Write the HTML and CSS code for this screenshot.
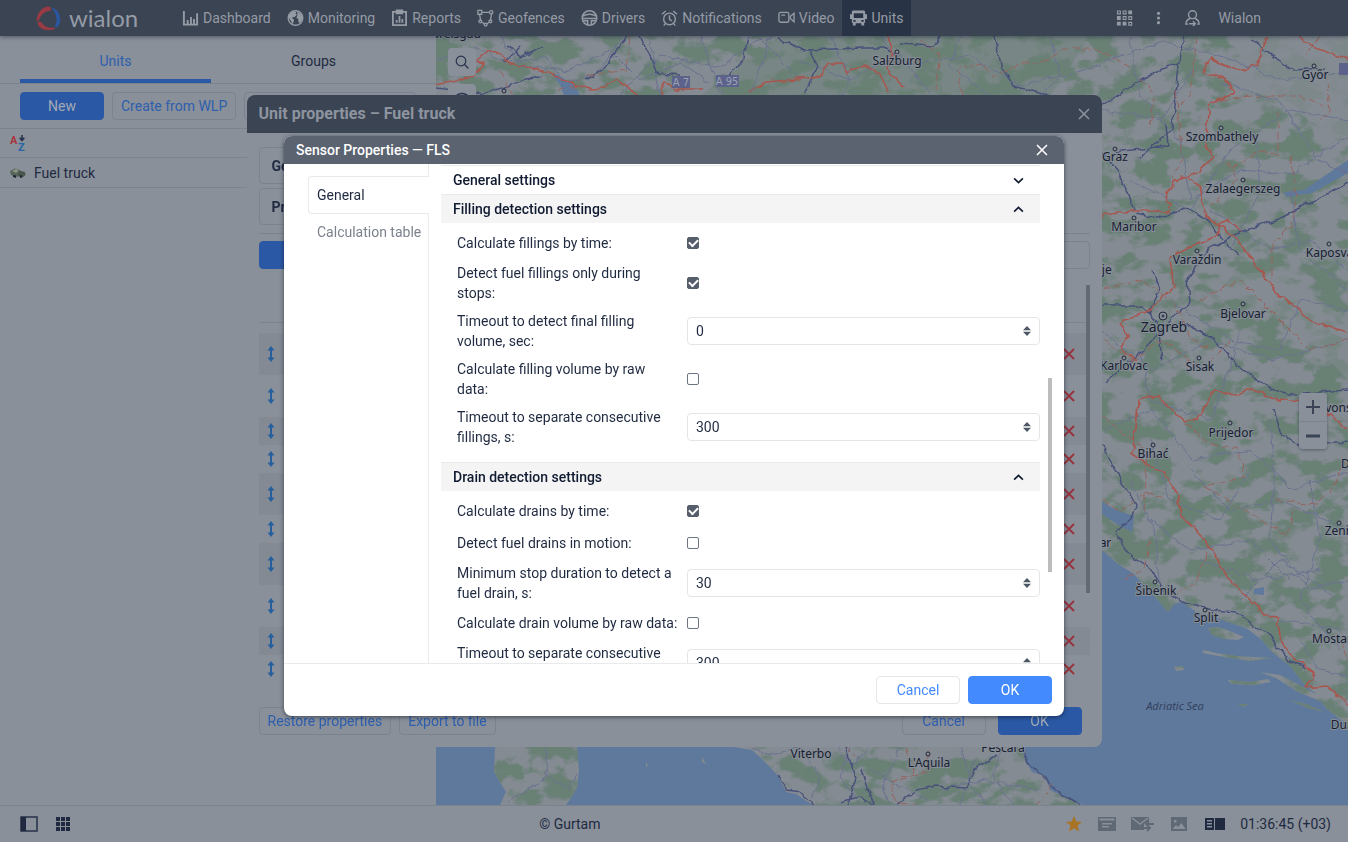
FILE: index.html
```html
<!DOCTYPE html>
<html lang="en">
<head>
  <meta charset="UTF-8" />
  <meta name="viewport" content="width=device-width, initial-scale=1.0" />
  <title>Wialon</title>
  <link rel="stylesheet" href="styles.css">
</head>
<body>
  <svg class="sprite" aria-hidden="true">
    <symbol id="i-updown" viewBox="0 0 8 16"><path d="M4 0l3.500 4.500H5v7h2.500L4 16 .5 11.500H3v-7H.5z"/></symbol>
    <symbol id="i-x" viewBox="0 0 12 12"><path d="M1 1l10 10M11 1L1 11"/></symbol>
    <symbol id="i-spin" viewBox="0 0 8 10"><path d="M4 0l4 4.300H0zM4 10L0 5.700h8z"/></symbol>
  </svg>

  <header class="topbar">
    <a href="#" class="logo">
      <svg class="logo-mark" viewBox="0 0 24 24">
        <path d="M12.500 .5C7 0 1 6 .5 14c.8 1.500 2 .5 2.500-.8C4.500 8.500 8 5 14 4.500 15 2.500 14 1 12.500.5z" fill="#983b45"/>
        <path d="M1.500 16.500c1 5.500 9 8.500 16.500 5.500.6-.8 0-1.300-.8-1.200C12 21.200 8.500 20 6 16.500c-1.500-2-4-1.500-4.500 0z" fill="#983b45"/>
        <path d="M14.500 1.500c5 .5 9.300 6.500 8.800 12.500-.3 3-1.500 5.500-3.300 6.500-1.500.3-2-.8-1.500-2 2.500-4.500 1.500-11-4-17z" fill="#2b56a0"/>
      </svg>
      <span>wialon</span>
    </a>
    <nav class="menu">
      <a href="#"><svg viewBox="0 0 18 18"><path d="M2 1.500V16h15M6 15v-4M9.500 15V8M12.700 15v-5M16 15V4" fill="none" stroke="currentColor" stroke-width="2"/></svg>Dashboard</a>
      <a href="#"><svg viewBox="0 0 18 18"><circle cx="9" cy="9" r="7.700" fill="none" stroke="currentColor" stroke-width="1.500"/><path d="M2 6l4-4 4 .5-1 2 1.500 1L8 8l-3 .5L7.500 11 6 16 4 12 1.500 8zM11 2.500L15 5l1.500 4-2 5-2.500-.5V10L10 9l1-3z"/></svg>Monitoring</a>
      <a href="#"><svg viewBox="0 0 18 18"><path d="M2 2.500h14v14H2zM6 1h6v3H6zM6 14v-3M9 14V7M12 14v-4" fill="none" stroke="currentColor" stroke-width="1.900"/></svg>Reports</a>
      <a href="#"><svg viewBox="0 0 18 18"><g fill="none" stroke="currentColor" stroke-width="1.400"><path d="M5 3h8M2.700 5.500L4 12M15.500 5l-1.500 7M5.500 13.500L8 15.500M12.500 13.500L10.500 15.500"/><path d="M1 1h4v4H1z"/><circle cx="15" cy="3" r="1.800"/><circle cx="3.500" cy="12.500" r="1.500"/><circle cx="14.200" cy="12.500" r="1.500"/><circle cx="9.200" cy="16" r="1.500"/></g></svg>Geofences</a>
      <a href="#"><svg viewBox="0 0 18 18"><g fill="none" stroke="currentColor" stroke-width="1.600"><circle cx="9" cy="9" r="7.700"/><path d="M2 7c4-2.500 10-2.500 14 0M1.500 9.500h15M2.500 12H7v4.500M15.500 12H11v4.500"/></g></svg>Drivers</a>
      <a href="#"><svg viewBox="0 0 18 18"><g fill="none" stroke="currentColor" stroke-width="1.500"><circle cx="9" cy="10" r="6.200"/><path d="M9 6v4.500l2.500 1.500M1 5l4-3.500M17 5l-4-3.500M4.500 15L3 17M13.500 15l1.500 2"/></g></svg>Notifications</a>
      <a href="#"><svg viewBox="0 0 18 18"><g fill="none" stroke="currentColor" stroke-width="1.400"><rect x="1" y="3" width="10.500" height="10.500" rx="2"/><path d="M3.500 6h4M13 7.500L17 4v9l-4-3.500z"/></g></svg>Video</a>
      <a href="#" class="active"><svg viewBox="0 0 18 18"><path fill-rule="evenodd" d="M3 1h12l1 1v3h2v5h-2v4h-1v3h-3v-2.500H6V17H3v-3H2v-4H0V5h2V2zM4 4v5h10V4zM3.500 11v2h2.500v-2zM12 11v2h2.500v-2z"/></svg>Units</a>
    </nav>
    <div class="account">
      <svg viewBox="0 0 18 18"><path d="M13 1h4v4h-4zM1 7h4v4H1zM1 13h4v4H1zM7 13h4v4H7z"/><path d="M1.600 1.600h3v3h-3zM7.600 1.600h3v3h-3zM7.600 7.600h3v3h-3zM13.600 7.600h3v3h-3zM13.600 13.600h3v3h-3z" fill="none" stroke="currentColor" stroke-width="1.200"/></svg>
      <svg viewBox="0 0 18 18"><circle cx="9" cy="4" r="1.700"/><circle cx="9" cy="9" r="1.700"/><circle cx="9" cy="14" r="1.700"/></svg>
      <svg viewBox="0 0 18 18"><g fill="none" stroke="currentColor" stroke-width="1.500"><circle cx="9" cy="5.500" r="4.200"/><path d="M6.500 9.500C3.500 10.500 2 12 2 15.500h2.500M11.500 9.500c3 1 4.500 2.500 4.500 6h-2M5.500 15h6.500M9.500 12.500L12 15l-2.500 2.500"/></g></svg>
      <a href="#">Wialon</a>
    </div>
  </header>

  <main class="workspace">
    <aside class="sidebar">
      <div class="tabs">
        <a href="#" class="tab selected">Units</a>
        <a href="#" class="tab">Groups</a>
      </div>
      <div class="actions">
        <button class="btn primary">New</button>
        <button class="btn fit">Create from WLP</button>
        <button class="btn import" aria-label="Import"></button>
      </div>
      <div class="list-row">
        <svg class="sort" viewBox="0 0 16 16"><text x="0" y="9" class="sort-a">A</text><text x="8" y="16" class="sort-z">Z</text><path d="M12 0v5M9.700 2.800L12 5.500l2.300-2.700" fill="none" stroke="#26304a" stroke-width="1.500"/></svg>
      </div>
      <div class="list-row unit">
        <svg viewBox="0 0 16 12"><path d="M0 4l5-2.500L10 3l1 4-3 3L1 8z" fill="#55655a"/><path d="M2 4l4-2 3 1.500L6 6z" fill="#8b9485"/><path d="M9 3.500l6 1.500.5 3-3 2.500L8 9z" fill="#47554b"/><path d="M3 8l3 .5v2.500L3 10zM10 8.500l2-.5v2.500l-2 .5z" fill="#1e2736"/></svg>
        Fuel truck
      </div>
    </aside>

    <section class="map">
      <svg class="terrain" viewBox="436 36 912 769" preserveAspectRatio="xMidYMid slice">
        <defs>
          <filter id="woods" x="0" y="0" width="100%" height="100%" color-interpolation-filters="sRGB">
            <feTurbulence type="fractalNoise" baseFrequency="0.035 0.05" numOctaves="5" seed="11"/>
            <feColorMatrix values="0 0 0 0 .41  0 0 0 0 .5  0 0 0 0 .46  7 0 0 0 -3.2"/>
          </filter>
          <filter id="jag" x="-5%" y="-5%" width="110%" height="110%">
            <feTurbulence type="fractalNoise" baseFrequency="0.1" numOctaves="2" seed="4" result="n"/>
            <feDisplacementMap in="SourceGraphic" in2="n" scale="7" xChannelSelector="R" yChannelSelector="G"/>
          </filter>
          <clipPath id="land">
            <path d="M436 36H1348V724L1338 718 1326 708 1316 694 1304 684 1290 666 1272 652 1262 640 1246 628 1228 622 1212 616 1196 612 1182 602 1174 604 1168 612 1158 600 1148 590 1134 574 1118 564 1102 550V600H436z"/>
            <path d="M495 747H577L579 770 577 788 571 798 566 805H500L506 792 494 772z"/>
            <path d="M733 747L752 750 768 765 779 777 786 792 796 794 808 802 812 805H1082L1065 797 1050 790 1045 776 1032 772 1025 760 1021 747z"/>
            <path d="M1208 628l10-1 12 4 14 6-6 3-14-1-12-4zM1204 650l12 3 20 3 36 2-22 3-26-4-22-4zM1228 680l22 2 18-3 3 3-16 3-24-1zM1260 672l20 3 14 7 18 10 22 12-12-2-24-10-22-14zM1290 700l16 4 18 8-16-4zM1174 667l9-1 1 4-8 1zM1238 704h10l-4 3zM702 757l4 7-4-2zM646 762l2 4-2 1z"/>
          </clipPath>
        </defs>
        <rect x="436" y="36" width="912" height="769" fill="#5e799c"/>
        <g clip-path="url(#land)">
          <rect x="436" y="36" width="912" height="769" fill="#848b92"/>
          <rect x="436" y="36" width="912" height="769" filter="url(#woods)"/>
          <path d="M900 36h190l-40 60H700l80-60z" fill="#6a8076" opacity=".45"/>
          <path d="M1260 36h88v110l-60-40-70-30z" fill="#848b92" opacity=".75"/>
          <path d="M1190 280l100 40 58 60v-60l-70-50z" fill="#848b92" opacity=".5"/>
        </g>
        <g fill="#5e799c">
          <path d="M552 73l8 3 14 9 6 10h-16l-4-10zM1284 192l20-2 44-30v13l-36 20-26 4zM1102 502l14 8 18 6-2 16-12-6-18-12zM1254 589l10-2v8l-10-1z"/>
        </g>

        <g class="minor" filter="url(#jag)">
          <path d="M436 60l40-12 30 14 40-4 20 24 30-8 25-35M500 36l20 30 50 4 40-20 30 30 40-18 30 20M620 95l40-40 60 12 40-28 40 40M650 36l10 59M700 36l20 59M770 36l-20 59M800 60l50 20 50-26 30 41M830 36l20 44-10 15M880 36l20 30 70-10 50 30 80-20"/>
          <path d="M960 36l-10 30 40 29M1050 36l10 40-20 19M1102 62l60-20 70 18 50 20 66-8M1130 36l10 60 40 44 10 60M1102 110l60 10 30-50M1130 180l60 30 40-60 60-40 58 10M1220 82l60 20 40 60 28 10M1190 200l50-30 50 4 58-38M1210 210l60 40 40-10 38 30M1290 190l10 60 48 40M1256 140l4 50-30 60"/>
          <path d="M1102 330l50 40 60-30 60 20 76-20M1140 350l10 50 60 20 20-50 10-40M1170 300l60 40 50 10 20-50 48 10M1102 430l50-20 40 50 60-10 40 40 58-20M1150 440l20 60 50 20 30-50M1190 470l40 40 50-10 68 30M1270 420l4 60-4 60 40 50 38-10M1150 520l40 30 60-10 40 40M1130 480l24 50 6 60M1200 560l60 20 60-10M1240 600l40-40 60 40M1280 620l60 10M1310 480l10 60-20 60 40 50M1300 640l20 30 28 6"/>
          <path d="M546 747l2 30-40 25M548 775l20 15 8-15M750 747l20 8 30-8M800 747l20 30-8 20M850 747l-10 30 20 28M838 747l14 20 16-20M868 770l60 30M900 747l-18 40 8 18M960 747l10 30-10 28M975 760l-8 20 20 25M1000 750l-6 30 20 25M940 790l40-10 60 10"/>
        </g>
        <g class="road" filter="url(#jag)">
          <path d="M508 44l12 14 22-12M505 62l16-16M436 88l50 5 56-18M628 36l-26 34-16 10M640 36l18 38 22 2M748 36l-4 22-16 20M778 38l26 12 60-2 20 0 14 8M810 50l8 16-14 29M900 44l34 2 6-10M994 36l8 32 12 18 50 14"/>
          <path d="M1184 36l-4 26-40 18-38 26M1178 64l-6 66-34 28M1166 124l2 22-54 6M1102 152l15 18 10 20 7 20M1134 214l24 4 30-10 20 12 20 26 10 8M1252 40l40 30 34-2M1348 183l-70 36-40 14-30 16-20 30 2 24-16 14-32 34-36 30M1102 306l40 0 16 18 4 36M1152 270l8 20-12 24M1180 322l30 14 30 32 28 20 20 6 60-4M1102 446l18 32 16 28-4 12-16 14 12 22 24 16 12 22 20 10 28 8 24 2 34 24 20 26 14 6M1274 408l6 24 20 14 48-4"/>
          <path d="M779 776l8 14 12 2 14 12M844 747l12 30-8 28M862 770l10 30 2 5M1020 747l8 16 16 14 16 16 20 12M996 756l-22 14-8 18-30-2-20 4-20 15M840 802l20-6 12 8"/>
        </g>
        <g class="border" filter="url(#jag)">
          <path d="M436 84l38-7 10-14-8-2 12-10 14 2 8 12 14 0 30 10 20 10 16 4 16-1 10-8 22 14M660 95l4-14 10 8 30 0M748 92l18-10 54-5 6-14 14 0 6 10 18-8 16 9 8 18M888 36l4 18-6 14 18 20M930 36"/>
          <path d="M1267 36l-10 30-20 4-26-12-8 14 24 8 6 14-24 10-4 38 8 16-14 14-26 10-8 18 6 5-2 6-38 0-26 4-6 8-14-4M1188 178l12 8 6 30 30 22 28 38 14 20 20 12 14 14 36 10M1242 232l-14-12-8 4-2 12-22 8-26 14 4 30-24 22-30 12 8 14-6 14 14 10M1298 36l12 10 38 14M1120 490"/>
          <path d="M1348 430l-18-16-14 2-10-14-28-2-26-12-14 6-26-2-10 24-16 6-20-18-8-8-20 4-2 30-4 24 32 20 14 22 4 20 20 20 16 24 10 18 28 28 8 8 14 4 2 20 12 20 24 16-10 14 20-2 26 22"/>
        </g>
        <g class="region" filter="url(#jag)">
          <path d="M630 36l-4 34-40 6-10 8 M500 70l12 26M558 90l24-4M920 40l20 14-4 36M962 95l-4-26 24-6 10 14 34-14 20-2 18-12 30 0 30 14 20 20 10 10-4 34M1176 90l6 70-10 20M1196 36l-6 60-14 14M1222 100l40-4 40 0 22 10M1226 160l10 20-24 26M1278 110l0 44-20-2-30 18M1290 155l6 40-4 30-20 20 0 34M1102 290l40-10 30 20 20 40 20 10M1200 300l40-20 40 40 30 30 38-10M1102 340l30 20 30-20 40 30 30-30M1184 424l26 20 28 4 6 30-40 8 50 30 34 20 6-30M1102 416l30 24 16 10-4 60M1276 500l40 4 20-20 6-20 6 0M1102 500l20 12 24-20 20 6M1150 540l-6 30-20 10M1206 552l-10 30-24 14M1326 72l4 40-12 10M1320 36l-14 18M1342 640l6 20"/>
          <path d="M846 747l10 10M906 747l8 26-24 8 8 22 20 2M900 780l30-10-2-20M1054 783l-16 22"/>
        </g>

        <g class="shield"><rect x="672" y="76" width="18" height="12"/><rect x="716" y="75" width="23" height="12"/><rect x="1339" y="63" width="20" height="12"/></g>
        <g class="shield-text"><text x="681" y="86">A 7</text><text x="727" y="85">A 95</text></g>
        <g class="town">
          <circle cx="504" cy="91" r="2"/><circle cx="897" cy="52" r="2"/><circle cx="1314" cy="66" r="2"/><circle cx="1221" cy="128" r="2"/><circle cx="1115" cy="149" r="2"/>
          <circle cx="1243" cy="180" r="2"/><circle cx="1134" cy="218" r="2"/><circle cx="1197" cy="251" r="2"/><circle cx="1329" cy="244" r="2"/><circle cx="1243" cy="304" r="2"/>
          <circle cx="1163" cy="316" r="4"/><circle cx="1163" cy="316" r="1"/><circle cx="1124" cy="358" r="2"/><circle cx="1199" cy="358" r="2"/><circle cx="1230" cy="423" r="2"/>
          <circle cx="1153" cy="445" r="2"/><circle cx="1339" cy="523" r="2"/><circle cx="1155" cy="582" r="2"/><circle cx="1205" cy="610" r="2"/><circle cx="1329" cy="631" r="2"/><circle cx="928" cy="754" r="2"/>
        </g>
        <g class="place">
          <text x="456" y="38">Breisgau</text>
          <text x="897" y="65">Salzburg</text><text x="1315" y="79">Győr</text><text x="1222" y="141">Szombathely</text>
          <text x="1115" y="161">Graz</text><text x="1243" y="193">Zalaegerszeg</text><text x="1134" y="231">Maribor</text>
          <text x="1197" y="264">Varaždin</text><text x="1332" y="257">Kaposvár</text><text x="1098" y="274">Celje</text>
          <text x="1243" y="318">Bjelovar</text><text x="1164" y="332" class="capital">Zagreb</text><text x="1124" y="370">Karlovac</text>
          <text x="1200" y="371">Sisak</text><text x="1231" y="437">Prijedor</text><text x="1153" y="458">Bihać</text>
          <text x="1335" y="412">Slavonski</text><text x="1358" y="468">Doboj</text><text x="1343" y="535">Zenica</text><text x="1095" y="547">Zadar</text>
          <text x="1156" y="595">Šibenik</text><text x="1206" y="622">Split</text><text x="1332" y="643">Mostar</text>
          <text x="1360" y="729">Dubrovnik</text><text x="811" y="758">Viterbo</text><text x="929" y="767">L'Aquila</text><text x="1003" y="752">Pescara</text>
        </g>
        <text x="1175" y="710" class="sea">Adriatic Sea</text>
      </svg>
      <div class="map-tools">
        <button aria-label="Search"><svg viewBox="0 0 14 14"><g fill="none" stroke="#27324a" stroke-width="1.200"><circle cx="6" cy="6" r="4.800"/><path d="M9.500 9.500l4 4"/></g></svg></button>
        <button aria-label="Visibility"><svg viewBox="0 0 14 14"><g fill="none" stroke="#27324a" stroke-width="1.500"><path d="M0 7c3-6 11-6 14 0-3 6-11 6-14 0z"/><circle cx="7" cy="7" r="2"/></g></svg></button>
      </div>
      <div class="zoom">
        <button aria-label="Zoom in"><svg viewBox="0 0 14 14"><path d="M7 0v14M0 7h14" stroke="#3a4455" stroke-width="2"/></svg></button>
        <button aria-label="Zoom out"><svg viewBox="0 0 14 14"><path d="M0 7h14" stroke="#3a4455" stroke-width="3"/></svg></button>
      </div>
    </section>
  </main>

  <footer class="statusbar">
    <div class="status-left">
      <svg viewBox="0 0 18 16"><path d="M1 1h16v14H1z" fill="none" stroke="#26314a" stroke-width="1.500"/><path d="M1 1h5v14H1z"/></svg>
      <svg viewBox="0 0 18 16"><path d="M2 1h4v4H2zM7 1h4v4H7zM12 1h4v4h-4zM2 6h4v4H2zM7 6h4v4H7zM12 6h4v4h-4zM2 11h4v4H2zM7 11h4v4H7zM12 11h4v4h-4z"/></svg>
    </div>
    <span>© Gurtam</span>
    <div class="status-right">
      <svg class="star" viewBox="0 0 16 16"><path d="M8 0l2.300 5.500 5.700.4-4.400 3.700L13 15.500 8 12.300l-5 3.200 1.400-5.900L0 5.900l5.700-.4z"/></svg>
      <svg class="dim" viewBox="0 0 18 16"><path fill-rule="evenodd" d="M0 1h18v14H0zM1.500 2.500v2h15v-2zM4 7v1.500h10V7zM4 10v1.500h7V10z"/></svg>
      <svg class="dim wide" viewBox="0 0 24 16"><path d="M0 1h18v4l-5 3v6H0z"/><path d="M1 2l8 6 8-6" fill="none" stroke="#89909a" stroke-width="1.500"/><path d="M23 8h-8M18 5l-3 3 3 3M12 12h7M16 9l3 3-3 3" fill="none" stroke="currentColor" stroke-width="1.800"/></svg>
      <svg class="dim" viewBox="0 0 18 16"><path fill-rule="evenodd" d="M1 1h16v14H1zM2.500 13h13l-4-6-3.500 4L6 9zM4 4v2.500h2.500V4z"/></svg>
      <svg class="wide" viewBox="0 0 24 16"><path fill-rule="evenodd" d="M2 2h9v12H2zM4 4v1.500h5V4zM4 7v1.500h5V7zM4 10v1.500h5V10zM12 2h10v12H12z"/></svg>
      <time>01:36:45 (+03)</time>
    </div>
  </footer>

  <div class="overlay">
    <div class="dialog unit-dialog">
      <div class="dialog-head">
        <h2>Unit properties – Fuel truck</h2>
        <button class="close" aria-label="Close"><svg viewBox="0 0 12 12"><use href="#i-x"/></svg></button>
      </div>
      <div class="unit-body">
        <button class="prop-tab">General</button>
        <button class="prop-tab">Profile</button>
        <div class="toolbar">
          <button class="btn primary" aria-label="New sensor"></button>
          <input type="text" aria-label="Search sensors">
        </div>
        <div class="table-head"></div>
        <ul class="sensors">
          <li class="tall"><svg class="move"><use href="#i-updown"/></svg><svg class="del"><use href="#i-x"/></svg></li>
          <li class="tall"><svg class="move"><use href="#i-updown"/></svg><svg class="del"><use href="#i-x"/></svg></li>
          <li><svg class="move"><use href="#i-updown"/></svg><svg class="del"><use href="#i-x"/></svg></li>
          <li><svg class="move"><use href="#i-updown"/></svg><svg class="del"><use href="#i-x"/></svg></li>
          <li class="tall"><svg class="move"><use href="#i-updown"/></svg><svg class="del"><use href="#i-x"/></svg></li>
          <li><svg class="move"><use href="#i-updown"/></svg><svg class="del"><use href="#i-x"/></svg></li>
          <li class="tall"><svg class="move"><use href="#i-updown"/></svg><svg class="del"><use href="#i-x"/></svg></li>
          <li class="tall"><svg class="move"><use href="#i-updown"/></svg><svg class="del"><use href="#i-x"/></svg></li>
          <li><svg class="move"><use href="#i-updown"/></svg><svg class="del"><use href="#i-x"/></svg></li>
          <li><svg class="move"><use href="#i-updown"/></svg><svg class="del"><use href="#i-x"/></svg></li>
        </ul>
        <div class="scroll-thumb"></div>
      </div>
      <div class="unit-foot">
        <button class="btn fit">Restore properties</button>
        <button class="btn fit">Export to file</button>
        <button class="btn push">Cancel</button>
        <button class="btn primary">OK</button>
      </div>
    </div>
  </div>

  <div class="overlay front">
    <form class="dialog sensor-dialog">
      <div class="dialog-head">
        <h2>Sensor Properties — FLS</h2>
        <button type="button" class="close" aria-label="Close"><svg viewBox="0 0 12 12"><use href="#i-x"/></svg></button>
      </div>
      <div class="sensor-body">
        <nav class="side-tabs">
          <a href="#" class="current">General</a>
          <a href="#">Calculation table</a>
        </nav>
        <div class="settings">
          <h3>General settings <svg viewBox="0 0 10 6"><path d="M1 1l4 4 4-4"/></svg></h3>
          <h3 class="open">Filling detection settings <svg viewBox="0 0 10 6"><path d="M1 5l4-4 4 4"/></svg></h3>
          <div class="fields">
            <div class="field"><label for="f1">Calculate fillings by time:</label><input type="checkbox" id="f1" checked></div>
            <div class="field"><label for="f2">Detect fuel fillings only during stops:</label><input type="checkbox" id="f2" checked></div>
            <div class="field"><label for="f3">Timeout to detect final filling volume, sec:</label><div class="number"><input type="text" id="f3" value="0"><svg><use href="#i-spin"/></svg></div></div>
            <div class="field"><label for="f4">Calculate filling volume by raw data:</label><input type="checkbox" id="f4"></div>
            <div class="field"><label for="f5">Timeout to separate consecutive fillings, s:</label><div class="number"><input type="text" id="f5" value="300"><svg><use href="#i-spin"/></svg></div></div>
          </div>
          <h3 class="open">Drain detection settings <svg viewBox="0 0 10 6"><path d="M1 5l4-4 4 4"/></svg></h3>
          <div class="fields">
            <div class="field"><label for="d1">Calculate drains by time:</label><input type="checkbox" id="d1" checked></div>
            <div class="field"><label for="d2">Detect fuel drains in motion:</label><input type="checkbox" id="d2"></div>
            <div class="field"><label for="d3">Minimum stop duration to detect a fuel drain, s:</label><div class="number"><input type="text" id="d3" value="30"><svg><use href="#i-spin"/></svg></div></div>
            <div class="field"><label for="d4">Calculate drain volume by raw data:</label><input type="checkbox" id="d4"></div>
            <div class="field"><label for="d5">Timeout to separate consecutive drains, s:</label><div class="number"><input type="text" id="d5" value="300"><svg><use href="#i-spin"/></svg></div></div>
          </div>
        </div>
        <div class="scroll-thumb"></div>
      </div>
      <div class="sensor-foot">
        <button type="button" class="btn">Cancel</button>
        <button type="button" class="btn primary">OK</button>
      </div>
    </form>
  </div>
</body>
</html>
```

FILE: styles.css
```css
:root {
  --page: #89909a;
  --line: #7b838e;
  --bar: #3b4453;
  --bar-text: #959ba5;
  --text: #1f2a41;
  --link: #2e5eae;
  --blue: #2b58a4;
  --edge: #e9eaec;
}

* { box-sizing: border-box; margin: 0; padding: 0; }

body {
  display: flex;
  flex-direction: column;
  height: 100vh;
  overflow: hidden;
  font: 14px/20px Roboto, sans-serif;
  background: var(--page);
  color: var(--text);
}

a { color: inherit; text-decoration: none; }
button, input { font: inherit; color: inherit; }
button { cursor: pointer; }
.sprite { display: none; }

/* top bar */
.topbar {
  display: flex;
  align-items: center;
  height: 36px;
  padding: 0 87px 0 36px;
  background: var(--bar);
  color: var(--bar-text);
  position: relative;
  z-index: 1;
  box-shadow: 0 1px 4px rgba(20, 30, 50, 0.5);
}

.topbar svg { width: 17px; height: 18px; fill: currentColor; }
.topbar .logo-mark { width: 25px; height: 25px; }

.logo {
  display: flex;
  align-items: center;
  gap: 8px;
  width: 138px;
  font-family: Lato, sans-serif;
  font-size: 24px;
}

.menu { display: flex; align-self: stretch; }
.menu a {
  display: flex;
  align-items: center;
  gap: 4px;
  padding: 0 8px;
}
.menu .active { background: #293346; }

.account {
  display: flex;
  align-items: center;
  gap: 17px;
  margin-left: auto;
}

/* left panel */
.workspace { display: flex; flex: 1; min-height: 0; }
.sidebar { width: 436px; flex: none; }

.tabs {
  display: flex;
  gap: 7px;
  height: 48px;
  padding: 0 27px 0 20px;
  border-bottom: 1px solid var(--line);
}
.tab {
  flex: 1;
  padding-top: 15px;
  text-align: center;
}
.tab.selected {
  color: var(--link);
  border-bottom: 4px solid var(--blue);
}

.actions {
  display: flex;
  gap: 8px;
  padding: 8px 20px;
  border-bottom: 1px solid var(--line);
}

.btn {
  width: 84px;
  height: 28px;
  background: none;
  border: 1px solid var(--line);
  border-radius: 4px;
  color: var(--link);
  white-space: nowrap;
}
.btn.primary {
  background: var(--blue);
  border-color: var(--blue);
  color: #a2a9b5;
}
.btn.fit { width: auto; padding: 0 8px; }
.btn.import { flex: 1; }

.list-row {
  display: flex;
  align-items: center;
  gap: 8px;
  height: 29px;
  padding: 0 10px;
  border-bottom: 1px solid var(--line);
}
.list-row.unit { height: 30px; }
.list-row svg { width: 16px; height: 16px; overflow: visible; }
.sort text { font-size: 11px; font-weight: 700; }
.sort .sort-a { fill: #a8343f; }
.sort .sort-z { fill: #2765a5; }

/* map */
.map {
  position: relative;
  flex: 1;
  overflow: hidden;
}
.terrain { display: block; width: 100%; height: 100%; }
.terrain path { stroke-linejoin: round; }
.minor { fill: none; stroke: #6b7290; stroke-width: 1; }
.road { fill: none; stroke: #48517a; stroke-width: 1.500; }
.border { fill: none; stroke: #a8564e; stroke-width: 1.600; }
.region { fill: none; stroke: #96645e; stroke-width: 1; stroke-dasharray: 8 3; }
.shield { fill: #5c628a; }
.shield-text { fill: #9aa1b4; font: 10px "DejaVu Sans", sans-serif; text-anchor: middle; }
.town { fill: #858d99; stroke: #212838; stroke-width: 1; }
.place {
  font: 12px "Noto Sans", sans-serif;
  fill: #182030;
  stroke: #858d96;
  stroke-width: 2px;
  paint-order: stroke;
  text-anchor: middle;
}
.place .capital { font-size: 14px; }
.sea {
  font: italic 11px "Noto Sans", sans-serif;
  fill: #35435f;
  text-anchor: middle;
}

.map-tools {
  position: absolute;
  left: 12px;
  top: 12px;
  display: grid;
  gap: 8px;
}
.map-tools button, .zoom button {
  display: grid;
  place-items: center;
  width: 28px;
  height: 28px;
  border: 0;
  border-radius: 4px;
  background: var(--page);
}
.map button svg { width: 14px; height: 14px; }
.zoom {
  position: absolute;
  right: 21px;
  top: 357px;
  border-radius: 4px;
  background: var(--page);
  box-shadow: 0 1px 3px rgba(20, 30, 50, 0.4);
}
.zoom button + button { border-top: 1px solid var(--line); border-radius: 0 0 4px 4px; }

/* bottom bar */
.statusbar {
  display: flex;
  align-items: center;
  height: 37px;
  padding-right: 17px;
  border-top: 1px solid var(--line);
}
.statusbar svg { width: 18px; height: 16px; fill: var(--text); }
.status-left {
  display: flex;
  gap: 16px;
  width: 40vw;
  padding-left: 20px;
}
.status-right {
  display: flex;
  align-items: center;
  gap: 15px;
  margin-left: auto;
}
.statusbar .wide { width: 24px; }
.statusbar .star { fill: #a97325; }
.statusbar .dim { fill: #5f6875; color: #5f6875; }
.status-right time { margin-left: -2px; }

/* dialogs */
.overlay {
  position: fixed;
  inset: 0;
  display: grid;
  place-items: center;
  z-index: 2;
}
.overlay.front { padding-top: 10px; z-index: 3; }

.dialog {
  display: flex;
  flex-direction: column;
  border-radius: 8px;
  overflow: hidden;
}
.dialog-head {
  display: flex;
  align-items: center;
  justify-content: space-between;
  padding: 0 12px;
}
.dialog-head h2 { font-size: 14px; font-weight: 500; }
.close {
  display: grid;
  place-items: center;
  width: 20px;
  height: 20px;
  border: 0;
  background: none;
}
.close svg { width: 12px; height: 12px; stroke: currentColor; stroke-width: 1.500; }

.unit-dialog {
  width: 855px;
  max-width: 96vw;
  height: calc(100vh - 190px);
  background: var(--page);
}
.unit-dialog .dialog-head {
  height: 38px;
  background: var(--bar);
  color: #8d949f;
  padding-right: 8px;
}
.unit-dialog h2 { font-size: 16px; font-weight: 700; }
.unit-body {
  position: relative;
  flex: 1;
  min-height: 0;
  padding: 14px 12px 0;
  overflow: hidden;
}
.prop-tab {
  display: block;
  width: 180px;
  height: 37px;
  margin-bottom: 4px;
  padding: 0 12px;
  border: 1px solid var(--line);
  border-radius: 4px;
  background: none;
  text-align: left;
  font-weight: 700;
}
.toolbar {
  display: flex;
  gap: 8px;
  margin-top: 8px;
  padding-top: 7px;
  border-top: 1px solid var(--line);
}
.toolbar input {
  flex: 1;
  height: 28px;
  border: 1px solid var(--line);
  border-radius: 4px;
  background: none;
}
.table-head { height: 54px; border-bottom: 1px solid var(--line); }
.sensors { list-style: none; margin-top: 10px; }
.sensors li {
  display: flex;
  align-items: center;
  justify-content: space-between;
  height: 28px;
  padding: 0 15px 0 8px;
}
.sensors .tall { height: 42px; }
.sensors li:nth-child(odd) { background: #838a94; }
.move { width: 8px; height: 16px; fill: #255f9c; }
.del { width: 12px; height: 12px; stroke: #97323c; stroke-width: 1.800; }

.scroll-thumb {
  position: absolute;
  right: 12px;
  width: 4px;
}
.unit-body .scroll-thumb {
  top: 152px;
  height: 308px;
  background: #626a75;
}
.unit-foot {
  display: flex;
  gap: 8px;
  padding: 12px 20px 12px 12px;
}
.unit-foot .push { margin-left: auto; margin-right: 4px; }

.sensor-dialog {
  width: 780px;
  max-width: 92vw;
  height: calc(100vh - 262px);
  background: #fff;
  box-shadow: 0 1px 4px rgba(10, 20, 35, 0.6);
}
.sensor-dialog .dialog-head {
  height: 28px;
  background: #5b6370;
  color: #fff;
}
.sensor-body {
  position: relative;
  display: flex;
  flex: 1;
  min-height: 0;
  overflow: hidden;
}
.side-tabs {
  width: 145px;
  flex: none;
  padding: 12px 0 0 24px;
  background: linear-gradient(var(--edge), var(--edge)) right / 1px 100% no-repeat;
}
.side-tabs a {
  display: block;
  height: 38px;
  padding: 8px 9px;
  color: #7c828d;
  white-space: nowrap;
}
.side-tabs .current {
  padding: 8px;
  border: 1px solid var(--edge);
  border-right: 0;
  border-radius: 4px 0 0 4px;
  background: #fff;
  color: var(--text);
}
.settings {
  flex: 1;
  padding: 1px 24px 0 12px;
}
.settings h3 {
  display: flex;
  align-items: center;
  justify-content: space-between;
  height: 29px;
  padding: 0 16px 0 12px;
  border-top: 1px solid var(--edge);
  font-size: 14px;
  font-weight: 500;
  color: #101a30;
}
.settings h3.open { background: #f4f4f4; }
.settings h3 svg { width: 11px; height: 7px; fill: none; stroke: #101a30; stroke-width: 1.500; }
.fields { padding: 4px 0 11px 16px; }
.field {
  display: flex;
  align-items: center;
  min-height: 32px;
  padding: 4px 0;
}
.field label { width: 222px; margin-right: 8px; flex: none; }

.number { position: relative; flex: 1; }
.number input {
  display: block;
  width: 100%;
  height: 28px;
  padding: 0 8px;
  border: 1px solid #e4e5e8;
  border-radius: 4px;
}
.number svg {
  position: absolute;
  right: 9px;
  top: 9px;
  width: 8px;
  height: 10px;
  fill: #4d5664;
}

input[type="checkbox"] {
  appearance: none;
  width: 12px;
  height: 12px;
  border: 1px solid #6d7582;
  border-radius: 2px;
  background: #fff;
}
input[type="checkbox"]:checked {
  border-color: #565e6c;
  background: #565e6c;
  display: grid;
  place-items: center;
}
input[type="checkbox"]:checked::before {
  content: "";
  width: 7px;
  height: 4px;
  border: solid #fff;
  border-width: 0 0 2px 2px;
  transform: translateY(-1px) rotate(-45deg);
}

.sensor-body .scroll-thumb {
  top: 214px;
  height: 194px;
  background: #bdbdbd;
}
.sensor-foot {
  display: flex;
  justify-content: flex-end;
  gap: 8px;
  padding: 12px;
  border-top: 1px solid var(--edge);
}
.sensor-foot .btn { border-color: #e6e7e9; color: #448aff; }
.sensor-foot .btn.primary { background: #448aff; border-color: #448aff; color: #fff; }
```
